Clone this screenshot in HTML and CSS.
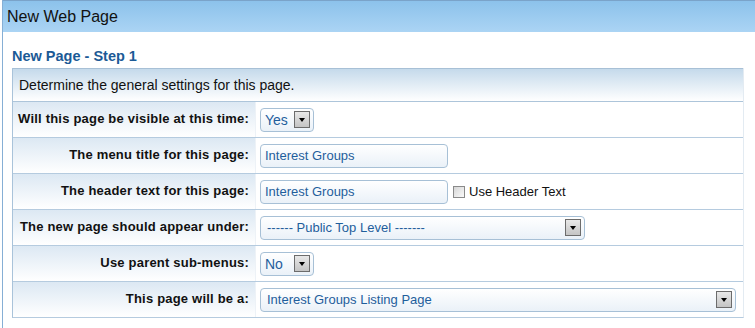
FILE: index.html
```html
<!DOCTYPE html>
<html>
<head>
<meta charset="utf-8">
<link rel="stylesheet" href="styles.css">
</head>
<body>
<div class="panel">
  <div class="panel-head">New Web Page</div>
  <div class="panel-body">
    <div class="step">New Page - Step 1</div>
    <div class="form">
      <div class="intro">Determine the general settings for this page.</div>
      <div class="row">
        <div class="label">Will this page be visible at this time:</div>
        <div class="value">
          <div class="sel w-yes"><span class="sel-text">Yes</span><span class="arrow"></span></div>
        </div>
      </div>
      <div class="row">
        <div class="label">The menu title for this page:</div>
        <div class="value">
          <div class="txt">Interest Groups</div>
        </div>
      </div>
      <div class="row">
        <div class="label">The header text for this page:</div>
        <div class="value">
          <div class="txt">Interest Groups</div>
          <span class="check"></span><span class="check-label">Use Header Text</span>
        </div>
      </div>
      <div class="row">
        <div class="label">The new page should appear under:</div>
        <div class="value">
          <div class="sel w-parent"><span class="sel-text">------ Public Top Level -------</span><span class="arrow"></span></div>
        </div>
      </div>
      <div class="row">
        <div class="label">Use parent sub-menus:</div>
        <div class="value">
          <div class="sel w-no"><span class="sel-text">No</span><span class="arrow"></span></div>
        </div>
      </div>
      <div class="row">
        <div class="label">This page will be a:</div>
        <div class="value">
          <div class="sel w-type"><span class="sel-text">Interest Groups Listing Page</span><span class="arrow"></span></div>
        </div>
      </div>
    </div>
  </div>
</div>
</body>
</html>
```
FILE: styles.css
```css
html, body {
  margin: 0;
  padding: 0;
  background: #fff;
  font-family: "Liberation Sans", Arial, sans-serif;
  overflow: hidden;
}
.panel {
  margin-left: 2px;
  border-left: 1px solid #86afd5;
  height: 328px;
}
.panel-head {
  height: 31px;
  border-top: 1px solid #7aa3c9;
  background: linear-gradient(to bottom, #8cc2eb, #abd4f4);
  font-size: 16px;
  color: #111;
  line-height: 31px;
  padding-left: 4px;
}
.panel-body {
  padding: 0 0 0 9px;
}
.step {
  font-size: 14.5px;
  font-weight: bold;
  color: #1c5a96;
  height: 36px;
  line-height: 17px;
  padding-top: 16px;
  box-sizing: border-box;
}
.form {
  width: 730px;
  border-left: 1px solid #a9c3da;
  border-right: 1px solid #e3ebf2;
  border-bottom: 1px solid #b5cbdf;
}
.intro {
  height: 32px;
  border-top: 1px solid #a8c0d6;
  border-bottom: 1px solid #adc5da;
  background: linear-gradient(to bottom, #c5daeb, #ffffff);
  font-size: 14px;
  color: #111;
  line-height: 32px;
  padding-left: 6px;
}
.row {
  display: flex;
  height: 35px;
  border-bottom: 1px solid #b5cbdf;
}
.row:last-child {
  border-bottom: none;
}
.label {
  width: 236px;
  flex: none;
  padding-right: 6px;
  text-align: right;
  font-size: 13px;
  letter-spacing: 0.2px;
  font-weight: bold;
  color: #111;
  line-height: 34px;
  background: linear-gradient(to bottom, #dce8f3, #ffffff);
  border-right: 1px solid #edf2f7;
  white-space: nowrap;
}
.value {
  flex: 1;
  display: flex;
  align-items: center;
  padding-left: 4px;
}
.txt, .sel {
  box-sizing: border-box;
  height: 24px;
  border: 1px solid #a7c0d6;
  border-radius: 4px;
  background: linear-gradient(to bottom, #ffffff, #eaf1f8);
  color: #1f5e9c;
  font-size: 13px;
  line-height: 22px;
  padding-left: 4px;
}
.txt {
  width: 188px;
}
.check {
  width: 12px;
  height: 12px;
  border: 1px solid #8a8a8a;
  background: linear-gradient(135deg, #d6d6d6, #fafafa);
  margin-left: 5px;
  box-sizing: border-box;
}
.check-label {
  font-size: 13px;
  color: #111;
  margin-left: 4px;
}
.sel {
  display: flex;
  align-items: center;
  justify-content: space-between;
  padding-right: 3px;
  padding-left: 6px;
}
.sel-text {
  white-space: nowrap;
}
.arrow {
  width: 16px;
  height: 17px;
  box-sizing: border-box;
  border: 1px solid #6c6c6c;
  background: linear-gradient(to bottom, #e8e8e8, #c4c4c4);
  position: relative;
  flex: none;
}
.arrow::after {
  content: "";
  position: absolute;
  left: 4px;
  top: 6px;
  border-left: 3px solid transparent;
  border-right: 3px solid transparent;
  border-top: 4px solid #000;
}
.w-yes { width: 54px; font-size: 14px; padding-left: 4px; }
.w-no { width: 54px; font-size: 14px; padding-left: 4px; }
.w-parent { width: 325px; }
.w-type { width: 476px; }
```
